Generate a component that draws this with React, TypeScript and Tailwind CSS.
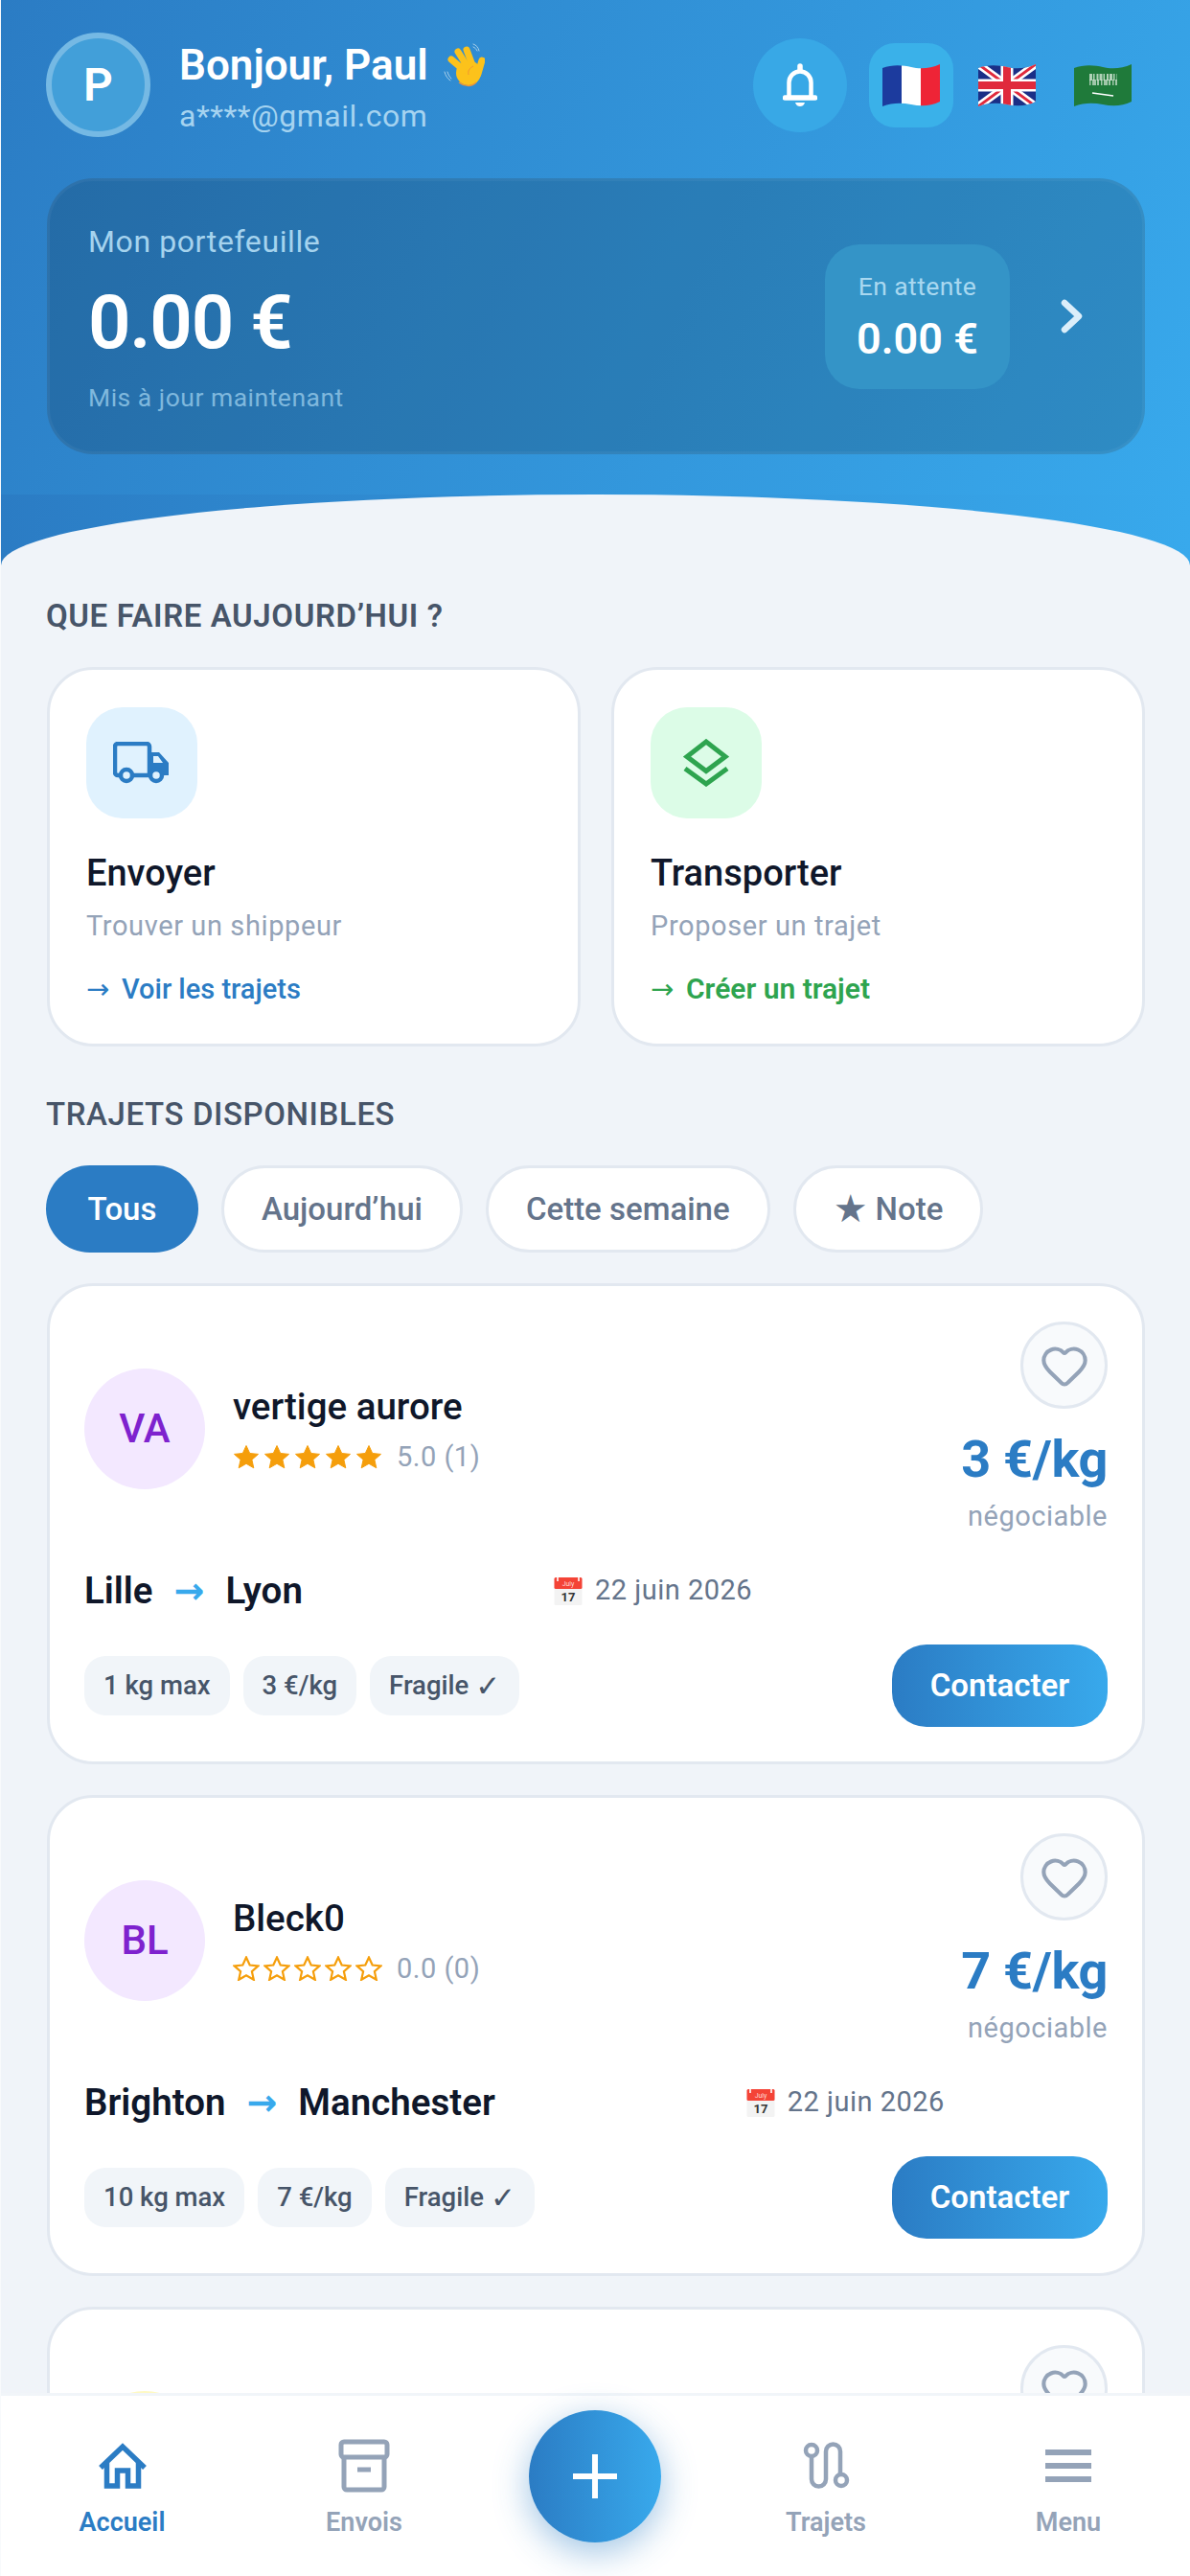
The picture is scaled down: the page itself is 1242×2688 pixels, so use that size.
import React from "react";
import { Heart } from "lucide-react";

const Hand = () => (
  <svg width="44" height="50" viewBox="20 12 44 50" className="shrink-0">
    <g fill="none" stroke="#a9cfe9" strokeWidth="1" strokeLinecap="round">
      <path d="M22 44c1 4 3 7 6 9" />
      <path d="M25 44c1 3 2 5 4 7" />
      <path d="M52 15c3 1 5 3 6 7" />
      <path d="M52 18c2 1 3 2 4 4" />
    </g>
    <circle cx="47" cy="45" r="13" fill="#fcc21b" />
    <g stroke="#fcc21b" strokeWidth="7" strokeLinecap="round" fill="none">
      <path d="M29 31l13 11" />
      <path d="M36 23l10 16" />
      <path d="M45 21l6 16" />
      <path d="M61 32l-4 14" />
    </g>
    <path d="M52 38c-4 2-6 5-5 9" stroke="#f19534" strokeWidth="1" fill="none" />
    <path d="M37 55c5 4 13 5 18 0" stroke="#f19534" strokeWidth="1.5" fill="none" />
  </svg>
);

const wave = "M0 4C10 0 22 1 30 3S50 5 60 0V39C50 44 40 44 30 42S10 40 0 44Z";

const FlagFr = () => (
  <svg width="60" height="44" viewBox="0 0 60 44">
    <clipPath id="fr"><path d={wave} /></clipPath>
    <g clipPath="url(#fr)">
      <rect width="20" height="44" fill="#1c3b9e" />
      <rect x="20" width="20" height="44" fill="#ffffff" />
      <rect x="40" width="20" height="44" fill="#ee2436" />
    </g>
  </svg>
);

const FlagUk = () => (
  <svg width="60" height="44" viewBox="0 0 60 44">
    <clipPath id="uk"><path d={wave} /></clipPath>
    <g clipPath="url(#uk)">
      <rect width="60" height="44" fill="#1b2f86" />
      <path d="M0 0L60 44M60 0L0 44" stroke="#ffffff" strokeWidth="8" />
      <path d="M0 0L60 44M60 0L0 44" stroke="#e02a3c" strokeWidth="3" />
      <path d="M30 0V44M0 22H60" stroke="#ffffff" strokeWidth="13" />
      <path d="M30 0V44M0 22H60" stroke="#e02a3c" strokeWidth="8" />
    </g>
  </svg>
);

const FlagSa = () => (
  <svg width="60" height="44" viewBox="0 0 60 44">
    <clipPath id="sa"><path d={wave} /></clipPath>
    <g clipPath="url(#sa)">
      <rect width="60" height="44" fill="#1f7a3a" />
      <path d="M16 13.500H45" stroke="#d7e8d8" strokeWidth="7" strokeDasharray="3 1 1.500 2 2 1" opacity="0.8" />
      <path d="M16 19H45" stroke="#d7e8d8" strokeWidth="6" strokeDasharray="1.500 1.500 4 1 2 2" opacity="0.7" />
      <path d="M19 30L41 33" stroke="#ffffff" strokeWidth="1.4" />
    </g>
  </svg>
);

const Calendar = () => (
  <svg width="30" height="30" viewBox="0 0 30 30" className="shrink-0">
    <rect x="0.5" y="1" width="29" height="29" rx="1.5" fill="#f3f3f3" />
    <rect x="0.5" y="1" width="29" height="12" rx="1.5" fill="#f44336" />
    <path d="M4 0v5M26 0v5" stroke="#ffffff" strokeWidth="1.6" />
    <text x="15" y="10" textAnchor="middle" fontSize="7" fill="#ffd7d3" fontFamily="Roboto, sans-serif">July</text>
    <text x="15" y="26" textAnchor="middle" fontSize="13" fontWeight="700" fill="#333333" fontFamily="Roboto, sans-serif">17</text>
  </svg>
);

const Bell = () => (
  <svg width="36" height="46" viewBox="0 0 36 46" fill="none">
    <path d="M18 3v4" stroke="#fff" strokeWidth="5.500" strokeLinecap="round" />
    <path d="M6.500 35V20a11.500 11.500 0 0 1 23 0v15" stroke="#fff" strokeWidth="4.500" />
    <path d="M2.500 36h31" stroke="#fff" strokeWidth="5.500" strokeLinecap="round" />
    <path d="M13 41h10c-1 3-3 4-5 4s-4-1-5-4z" fill="#fff" />
  </svg>
);

const Truck = () => (
  <svg width="60" height="44" viewBox="0 0 60 44" fill="none">
    <path d="M9 35H5a3 3 0 0 1-3-3V5a3 3 0 0 1 3-3h30a3 3 0 0 1 3 3v30H20" stroke="#2b7cc4" strokeWidth="4.500" />
    <path d="M38 11h10l10 11v13h-20z" fill="#2b7cc4" />
    <path d="M42 15h5l5 7h-10z" fill="#e0f2fe" />
    <circle cx="14" cy="35" r="6" fill="#e0f2fe" stroke="#2b7cc4" strokeWidth="4.500" />
    <circle cx="45" cy="35" r="6" fill="#e0f2fe" stroke="#2b7cc4" strokeWidth="4.500" />
  </svg>
);

const Layers = () => (
  <svg width="48" height="50" viewBox="0 0 48 50" fill="none" stroke="#2ea44f" strokeWidth="5">
    <path d="M24 3L44 18.500L24 33.500L4 18.500Z" />
    <path d="M2 31L24 47L46 31" />
  </svg>
);

const Star = ({ filled }: { filled: boolean }) => (
  <svg width="28" height="26" viewBox="0 0 28 26">
    <path
      d="M14 1.500l3.700 8 8.800.9-6.600 5.800 1.900 8.600L14 20.300l-7.800 4.500 1.900-8.600L1.500 10.400l8.800-.9z"
      fill={filled ? "#f59e0b" : "none"}
      stroke="#f59e0b"
      strokeWidth={filled ? 1 : 2.200}
    />
  </svg>
);

const Home = () => (
  <svg width="52" height="48" viewBox="0 0 52 48" fill="none" stroke="#2b7cc4" strokeWidth="5.500">
    <path d="M3 26L26 4L49 26" />
    <path d="M9.500 21V45H20.500V29H31.500V45H42.500V21" />
  </svg>
);

const ArchiveIcon = () => (
  <svg width="54" height="56" viewBox="0 0 54 56" fill="none" stroke="#94a3b8" strokeWidth="5">
    <rect x="3" y="3" width="48" height="16" rx="3" />
    <path d="M6 19V50a3 3 0 0 0 3 3H45a3 3 0 0 0 3-3V19" />
    <path d="M20 32H34" />
  </svg>
);

const RouteIcon = () => (
  <svg width="50" height="52" viewBox="0 0 50 52" fill="none" stroke="#94a3b8" strokeWidth="4.500">
    <circle cx="10" cy="10" r="6" />
    <circle cx="41" cy="41" r="6" />
    <path d="M10 16V40a7.500 7.500 0 0 0 15 0V11a7.500 7.500 0 0 1 15 0V35" />
  </svg>
);

const MenuIcon = () => (
  <svg width="48" height="40" viewBox="0 0 48 40" fill="#94a3b8">
    <rect y="3" width="48" height="6" />
    <rect y="17" width="48" height="6" />
    <rect y="31" width="48" height="6" />
  </svg>
);

const Chevron = () => (
  <svg width="24" height="36" viewBox="0 0 24 36" fill="none" stroke="#dbeefa" strokeWidth="6.500" strokeLinecap="round" strokeLinejoin="round">
    <path d="M4 4L19 18L4 32" />
  </svg>
);

const HeartButton = () => (
  <div className="w-[91px] h-[91px] rounded-full border-[3px] border-[#e2e8f0] bg-[#f8fafc] flex items-center justify-center shrink-0">
    <Heart size={52} strokeWidth={1.9} color="#94a3b8" />
  </div>
);

const ActionCard = ({
  icon, iconBg, title, sub, link, linkClass,
}: { icon: React.ReactNode; iconBg: string; title: string; sub: string; link: string; linkClass: string }) => (
  <div className="flex-1 h-[396px] bg-white rounded-[48px] border-[3px] border-[#e2e8f0] pt-[39px] pl-[38px]">
    <div className={`w-[116px] h-[116px] rounded-[38px] flex items-center justify-center ${iconBg}`}>{icon}</div>
    <div className="mt-[31px] text-[38px] leading-[52px] font-medium text-[#0f172a]">{title}</div>
    <div className="mt-[9px] text-[29px] leading-[40px] tracking-[0.6px] text-[#94a3b8]">{sub}</div>
    <div className={`mt-[26px] leading-[40px] flex items-center gap-[9px] ${linkClass}`}>
      <span className="text-[29px] font-medium w-[28px]">→</span>
      <span>{link}</span>
    </div>
  </div>
);

type Trip = {
  initials: string; name: string; filled: boolean; rating: string; price: string;
  from: string; to: string; tags: string[];
};

const TopRow = ({ t, avatarBg }: { t: Trip; avatarBg: string }) => (
  <div className="flex items-center justify-between">
    <div className="flex items-center gap-[29px]">
      <div className={`w-[126px] h-[126px] rounded-full flex items-center justify-center text-[42px] font-medium text-[#7e22ce] ${avatarBg}`}>
        {t.initials}
      </div>
      <div className="flex flex-col gap-[6px]">
        <div className="text-[38.5px] leading-[52px] font-medium text-[#0f172a]">{t.name}</div>
        <div className="flex items-center h-[40px]">
          <div className="flex gap-[4px]">
            {[0, 1, 2, 3, 4].map((i) => <Star key={i} filled={t.filled} />)}
          </div>
          <span className="ml-[15px] text-[29px] leading-[40px] tracking-[0.5px] text-[#94a3b8]">{t.rating}</span>
        </div>
      </div>
    </div>
    <div className="flex flex-col items-end">
      <HeartButton />
      <div className="mt-[21px] text-[54px] leading-[64px] font-bold tracking-[-0.3px] text-[#2b7cc4]">{t.price}</div>
      <div className="mt-[7px] text-[29px] leading-[40px] tracking-[0.5px] text-[#94a3b8]">négociable</div>
    </div>
  </div>
);

const TripCard = ({ t }: { t: Trip }) => (
  <div className="bg-white rounded-[48px] border-[3px] border-[#e2e8f0] pt-[37px] pb-[36px] px-[36px]">
    <TopRow t={t} avatarBg="bg-[#f3e8ff]" />
    <div className="mt-[32px] flex items-center h-[52px]">
      <span className="text-[38.5px] font-semibold text-[#0f172a]">{t.from}</span>
      <span className="mx-[22px] text-[38px] font-semibold text-[#38a9ec]">→</span>
      <span className="text-[38.5px] font-semibold text-[#0f172a]">{t.to}</span>
      <div className="ml-[262px] flex items-center gap-[13px]">
        <Calendar />
        <span className="text-[29px] tracking-[0.5px] text-[#64748b]">22 juin 2026</span>
      </div>
    </div>
    <div className="mt-[30px] flex items-center justify-between h-[86px]">
      <div className="flex items-center gap-[14px]">
        {t.tags.map((tag) => (
          <span key={tag} className="h-[62px] px-[20px] rounded-[22px] bg-[#f1f5f9] flex items-center gap-[7px] text-[27.5px] font-medium text-[#475569]">
            {tag}
          </span>
        ))}
        <span className="h-[62px] px-[20px] rounded-[22px] bg-[#f1f5f9] flex items-center gap-[7px] text-[27.5px] font-medium text-[#475569]">
          Fragile <span className="text-[31px] font-bold leading-none">✓</span>
        </span>
      </div>
      <div className="w-[225px] h-[86px] rounded-[36px] bg-[linear-gradient(90deg,#2b7cc4,#38a9ec)] flex items-center justify-center text-[33px] font-semibold text-white">
        Contacter
      </div>
    </div>
  </div>
);

const trips: Trip[] = [
  { initials: "VA", name: "vertige aurore", filled: true, rating: "5.0 (1)", price: "3 €/kg", from: "Lille", to: "Lyon", tags: ["1 kg max", "3 €/kg"] },
  { initials: "BL", name: "Bleck0", filled: false, rating: "0.0 (0)", price: "7 €/kg", from: "Brighton", to: "Manchester", tags: ["10 kg max", "7 €/kg"] },
];

const pillClass = "h-[91px] px-[39px] rounded-full bg-white border-[3px] border-[#e2e8f0] flex items-center text-[33px] font-medium text-[#64748b]";

const NavItem = ({ icon, label, active }: { icon: React.ReactNode; label: string; active?: boolean }) => (
  <div className="flex flex-col items-center pt-[45px]">
    <div className="h-[56px] flex items-center justify-center">{icon}</div>
    <div className={`mt-[13px] text-[27px] leading-[36px] font-semibold ${active ? "text-[#2b7cc4]" : "text-[#94a3b8]"}`}>{label}</div>
  </div>
);

export default function App() {
  return (
    <div className="w-[1242px] h-[2688px] pl-px bg-[#f8fafc] overflow-hidden flex flex-col font-['Roboto','DejaVu_Sans',sans-serif]">
      <header className="shrink-0 h-[516px] pt-[34px] pl-[47px] pr-[47px] bg-[linear-gradient(115deg,#2b7cc4,#38a9ec)]">
        <div className="flex items-center justify-between h-[109px]">
          <div className="flex items-center gap-[30px]">
            <div className="w-[109px] h-[109px] rounded-full bg-[#429fd9] border-[6px] border-[#75b9e4] flex items-center justify-center text-[48px] font-semibold text-white">
              P
            </div>
            <div className="flex flex-col mt-[5px]">
              <div className="flex items-center gap-[15px] h-[56px] text-[44px] font-semibold text-white">
                <span>Bonjour, Paul</span>
                <Hand />
              </div>
              <div className="mt-[3px] text-[32px] leading-[44px] tracking-[0.5px] text-[#a5d3f0]">a****@gmail.com</div>
            </div>
          </div>
          <div className="flex items-center">
            <div className="w-[98px] h-[98px] rounded-full bg-[#38a8e6] flex items-center justify-center mr-[23px]">
              <Bell />
            </div>
            <div className="flex gap-[12px]">
              <div className="w-[88px] h-[88px] rounded-[27px] bg-[#3ab1e9] flex items-center justify-center"><FlagFr /></div>
              <div className="w-[88px] h-[88px] flex items-center justify-center"><FlagUk /></div>
              <div className="w-[88px] h-[88px] flex items-center justify-center"><FlagSa /></div>
            </div>
          </div>
        </div>
        <div className="mt-[43px] ml-px h-[288px] rounded-[48px] border-[3px] border-white/[0.04] bg-black/[0.16] pl-[40px] pr-[61px] flex items-center">
          <div className="flex-1 self-start pt-[39px]">
            <div className="text-[32px] leading-[48px] tracking-[0.6px] text-[#a5d3ee]">Mon portefeuille</div>
            <div className="mt-[17px] text-[78px] leading-[88px] font-semibold tracking-[-1.2px] text-white">0.00 €</div>
            <div className="mt-[14px] text-[26.5px] leading-[40px] tracking-[0.5px] text-[#7fb8dd]">Mis à jour maintenant</div>
          </div>
          <div className="w-[193px] h-[151px] rounded-[36px] bg-[#3494c7] flex flex-col items-center pt-[24px]">
            <div className="text-[26.5px] leading-[40px] tracking-[0.4px] text-[#a9d8f0]">En attente</div>
            <div className="mt-[7px] text-[45px] leading-[56px] font-semibold text-white">0.00 €</div>
          </div>
          <div className="ml-[53px]"><Chevron /></div>
        </div>
      </header>

      <main className="flex-1 min-h-0 overflow-hidden bg-[#f0f4f9]">
        <div className="h-[74px] bg-[linear-gradient(90deg,#2b7cc4,#38a9ec)]">
          <div className="h-full bg-[#f0f4f9] rounded-[50%_50%_0_0/100%_100%_0_0]" />
        </div>
        <div className="pl-[47px] pr-[47px]">
          <div className="mt-[31px] text-[33px] leading-[44px] font-semibold tracking-[0.6px] text-[#475569]">QUE FAIRE AUJOURD’HUI ?</div>
          <div className="mt-[31px] ml-px flex gap-[32px]">
            <ActionCard icon={<Truck />} iconBg="bg-[#e0f2fe]" title="Envoyer" sub="Trouver un shippeur" link="Voir les trajets" linkClass="text-[29px] font-medium text-[#2b7cc4]" />
            <ActionCard icon={<Layers />} iconBg="bg-[#dcfce7]" title="Transporter" sub="Proposer un trajet" link="Créer un trajet" linkClass="text-[30px] font-semibold text-[#2ea44f]" />
          </div>
          <div className="mt-[49px] text-[33px] leading-[44px] font-medium tracking-[0.6px] text-[#475569]">TRAJETS DISPONIBLES</div>
          <div className="mt-[31px] flex gap-[24px]">
            <div className="h-[91px] w-[159px] rounded-full bg-[#2b7cc4] flex items-center justify-center text-[33px] font-medium text-white">Tous</div>
            <div className={pillClass}>Aujourd’hui</div>
            <div className={pillClass}>Cette semaine</div>
            <div className={pillClass}><span className="text-[40px] leading-none mr-[8px]">★</span>Note</div>
          </div>
          <div className="mt-[32px] ml-px flex flex-col gap-[32px]">
            {trips.map((t) => <TripCard key={t.name} t={t} />)}
            <div className="bg-white rounded-[48px] border-[3px] border-[#e2e8f0] pt-[37px] px-[36px] flex items-start justify-between">
              <div className="mt-[48px] w-[126px] h-[126px] rounded-full bg-[#fef9c3]" />
              <HeartButton />
            </div>
          </div>
        </div>
      </main>

      <nav className="relative z-10 shrink-0 h-[191px] bg-white border-t-[3px] border-[#f1f5f9] grid grid-cols-[253px_252px_230px_252px_254px]">
        <NavItem icon={<Home />} label="Accueil" active />
        <NavItem icon={<ArchiveIcon />} label="Envois" />
        <div className="flex justify-center pt-[15px]">
          <div className="w-[138px] h-[138px] rounded-full bg-[linear-gradient(90deg,#2b7cc4,#38a9ec)] shadow-[0_10px_36px_rgba(43,124,196,0.45)] flex items-center justify-center">
            <svg width="46" height="46" viewBox="0 0 46 46" fill="#ffffff">
              <rect x="20" width="6" height="46" />
              <rect y="20" width="46" height="6" />
            </svg>
          </div>
        </div>
        <NavItem icon={<RouteIcon />} label="Trajets" />
        <NavItem icon={<MenuIcon />} label="Menu" />
      </nav>
    </div>
  );
}
